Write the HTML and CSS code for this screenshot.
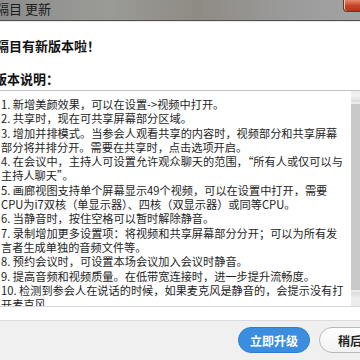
FILE: index.html
```html
<!DOCTYPE html>
<html lang="zh-CN">
<head>
    <meta charset="UTF-8">
    <meta name="viewport" content="width=device-width, initial-scale=1.0">
    <title>更新</title>
    <link rel="stylesheet" href="styles.css">
</head>
<body>

<div class="window">
    <!-- title bar -->
    <div class="titlebar">
        <span class="title">隔目 更新</span>
        <span class="close-btn"></span>
    </div>

    <div class="content">
        <div class="headline">隔目有新版本啦！</div>
        <div class="section-label">版本说明：</div>

        <!-- release notes box -->
        <div class="notes">
            <div class="notes-text">
                <div class="line">1. 新增美颜效果，可以在设置-&gt;视频中打开。</div>
                <div class="line">2. 共享时，现在可共享屏幕部分区域。</div>
                <div class="line">3. 增加并排模式。当参会人观看共享的内容时，视频部分和共享屏幕</div>
                <div class="line">部分将并排分开。需要在共享时，点击选项开启。</div>
                <div class="line">4. 在会议中，主持人可设置允许观众聊天的范围，“所有人或仅可以与</div>
                <div class="line">主持人聊天”。</div>
                <div class="line">5. 画廊视图支持单个屏幕显示49个视频，可以在设置中打开，需要</div>
                <div class="line">CPU为i7双核（单显示器）、四核（双显示器）或同等CPU。</div>
                <div class="line">6. 当静音时，按住空格可以暂时解除静音。</div>
                <div class="line">7. 录制增加更多设置项：将视频和共享屏幕部分分开；可以为所有发</div>
                <div class="line">言者生成单独的音频文件等。</div>
                <div class="line">8. 预约会议时，可设置本场会议加入会议时静音。</div>
                <div class="line">9. 提高音频和视频质量。在低带宽连接时，进一步提升流畅度。</div>
                <div class="line">10. 检测到参会人在说话的时候，如果麦克风是静音的，会提示没有打</div>
                <div class="line">开麦克风。</div>
            </div>
            <div class="scrollbar">
                <div class="arrow arrow-up"></div>
                <div class="thumb"></div>
                <div class="arrow arrow-down"></div>
            </div>
        </div>
    </div>

    <!-- footer buttons -->
    <div class="footer">
        <button class="btn btn-primary">立即升级</button>
        <button class="btn btn-later">稍后</button>
    </div>
</div>

</body>
</html>
```

FILE: styles.css
```css
body {
    margin: 0;
    padding: 0;
    background-color: #fff;
    font-family: "Noto Sans CJK SC", "Microsoft YaHei", sans-serif;
    color: #222;
    overflow: hidden;
}
.window {
    width: 360px;
    height: 360px;
    display: flex;
    flex-direction: column;
    overflow: hidden;
}
.titlebar {
    height: 20px;
    flex-shrink: 0;
    display: flex;
    justify-content: space-between;
    align-items: flex-start;
    background: linear-gradient(90deg, #8d8d8d 0%, #9a9a96 30%, #8f8b84 55%, #9b9b9b 80%, #a3a3a3 100%);
    border-bottom: 1px solid #4f4f4f;
}
.title {
    font-size: 13px;
    line-height: 17px;
    margin-left: -4px;
    color: #1b1b1b;
}
.close-btn {
    width: 16px;
    height: 11px;
    background: linear-gradient(180deg, #e58a6c 0%, #c9452a 50%, #b33419 100%);
    border: 1px solid #5a3a32;
    border-top: none;
    border-right: none;
    border-bottom-left-radius: 4px;
    box-shadow: inset 1px 0 0 #f0c2b0;
}
.content {
    flex: 1;
    display: flex;
    flex-direction: column;
    border-top: 1px solid #e8e8e8;
}
.headline {
    font-size: 13px;
    font-weight: bold;
    line-height: 18px;
    margin: 15px 0 0 -4px;
    color: #111;
}
.section-label {
    font-size: 13px;
    font-weight: bold;
    line-height: 18px;
    margin: 15px 0 0 -6px;
    color: #111;
}
.notes {
    margin-top: 2px;
    height: 215px;
    border-top: 1px solid #c4c4c4;
    border-bottom: 1px solid #d8d8d8;
    display: flex;
    overflow: hidden;
}
.notes-text {
    flex: 1;
    padding-top: 6px;
    padding-left: 1px;
    font-size: 11.2px;
    line-height: 14.3px;
    white-space: nowrap;
    overflow: hidden;
    color: #1e1e1e;
}
.scrollbar {
    width: 9px;
    flex-shrink: 0;
    display: flex;
    flex-direction: column;
    background-color: #ececec;
    padding-top: 3px;
}
.arrow {
    height: 8px;
    flex-shrink: 0;
}
.arrow-up {
    background: linear-gradient(180deg, #f6f6f6, #dcdcdc);
}
.arrow-down {
    margin-bottom: 6px;
    background: linear-gradient(180deg, #dcdcdc, #f0f0f0);
}
.thumb {
    flex: 1;
    margin: 2px 0;
    background-color: #c9c9c9;
}
.footer {
    height: 41px;
    margin-top: 13px;
    flex-shrink: 0;
    display: flex;
    align-items: flex-start;
    gap: 9px;
    padding: 6px 0 0 238px;
    background-color: #f0f0f0;
    border-top: 1px solid #dcdcdc;
}
.btn {
    flex-shrink: 0;
    height: 26px;
    border-radius: 13px;
    font-family: "Noto Sans CJK SC", sans-serif;
    font-size: 12px;
    font-weight: bold;
    padding: 0;
    cursor: pointer;
}
.btn-primary {
    width: 72px;
    background-color: #3b8de0;
    color: #fff;
    border: 1px solid #2f7dd0;
}
.btn-later {
    width: 80px;
    background: linear-gradient(180deg, #ffffff, #f2f2f2);
    color: #222;
    border: 1px solid #b8b8b8;
    text-align: left;
    padding-left: 18px;
}
```
